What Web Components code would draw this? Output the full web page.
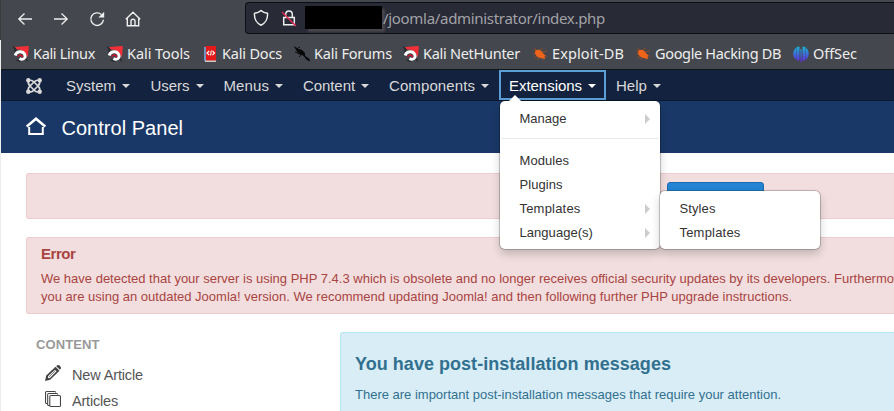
<!DOCTYPE html>
<html lang="en"><head><meta charset="utf-8"><title>Control Panel</title>
<style>
html,body{margin:0;height:411px;overflow:hidden;background:#fff;font-family:"Liberation Sans",Arial,sans-serif}
</style></head><body>
<app-window></app-window>
<script>
const define=(name,css,html,after)=>customElements.define(name,class extends HTMLElement{
  connectedCallback(){
    if(!this.shadowRoot){
      this.attachShadow({mode:'open'}).innerHTML=`<style>*{box-sizing:border-box}${css}</style>`+(typeof html==='function'?html(this):html);
    }
    if(after)after(this);
  }
});

/* Single-line label whose tracking is adjusted to reach the width in "w". */
define('fit-label',':host{display:inline-block;white-space:pre;flex:none}span{display:inline-block}','<span><slot></slot></span>',el=>{
  const s=el.shadowRoot.querySelector('span');
  queueMicrotask(()=>{
    const w=parseFloat(el.getAttribute('w')),n=el.textContent.length;
    if(!w||!n)return;
    s.style.letterSpacing='0';
    const now=s.getBoundingClientRect().width;
    if(now)s.style.letterSpacing=((w-now)/n)+'px';
  });
});

const dragon='<path d="M2 1L15.800 0 15 11.500 12.800 7.500 8 3.800 3.500 3.500Z" fill="#f52f38"/><path d="M0 .800L3.500 4M1 4l2 1.500M11.500 11.500l3 3.500M3.500 14l4 1.500" stroke="#24262a" stroke-width="1.200"/><path d="M2.200 9.500C3.500 5 9.500 4.500 11.500 8 13.500 12 10 14.500 6.500 12.500" fill="none" stroke="#fff" stroke-width="2.900"/><path d="M4.500 10.800C6.500 8.300 9.800 8.500 9.500 11.300" fill="none" stroke="#c9152c" stroke-width="1.500"/>';
const bug='<g stroke="#a14a20" stroke-width=".8" fill="none"><path d="M1.500 4L5 5 3 2M1 8h4M2 12l4-2M7 12l-2 2M10 12l1.500 2M11 9l4.300 1.500M10 6l5-1M8 4l3-2"/></g><path d="M3 6.500C3 4 6.500 2.800 9.300 5l2.500 3 1.700 1.500-1 1.200.800 2.300-3-.800C7 12.500 3.200 10 3 6.500Z" fill="#f0641a"/>';
const ico={
 back:['0 0 16 16','<path d="M15 8H1.500M7.500 2.500L1.800 8l5.700 5.500" fill="none" stroke="#eee" stroke-width="1.300"/>'],
 fwd:['0 0 16 16','<path d="M1 8h13.500M8.500 2.500L14.200 8l-5.700 5.500" fill="none" stroke="#eee" stroke-width="1.300"/>'],
 reload:['0 0 16 16','<path d="M12.400 3.500A6.300 6.300 0 1 0 14.400 8.800" fill="none" stroke="#eee" stroke-width="1.400"/><path d="M15.200.800v5.700H9.300Z" fill="#eee"/>'],
 home:['0 0 16 16','<path d="M.800 8.200L8 1.300l7.200 6.900M2.300 7v7.800h11.400V7M6 14.600V10c0-2.400 4-2.400 4 0v4.600" fill="none" stroke="#eee" stroke-width="1.400"/>'],
 shield:['0 0 16 18','<path d="M8 1.500C10 3.400 12.400 4 14.500 4.200 15 10 12 14.500 8 16.200 4 14.500 1 10 1.500 4.200 3.600 4 6 3.400 8 1.500Z" fill="none" stroke="#eee" stroke-width="1.500" stroke-linejoin="round"/>'],
 lock:['0 0 16 18','<path d="M4.700 8.500V5.500C4.700.800 11.300.800 11.300 5.500v3M2.700 8.500h10.600v7.200H2.700Z" fill="none" stroke="#eee" stroke-width="1.500"/><path d="M1 3L15 17" stroke="#e02950" stroke-width="1.500"/>'],
 dragon:['0 0 16 16',dragon],bug:['0 0 16 16',bug],
 docs:['0 0 16 16','<path d="M3 0h11v16H3Z" fill="#e21a1a"/><path d="M2 1h2v14H2Z" fill="#7292c4"/><path d="M3 14.500h11V16H3Z" fill="#ccc"/><path d="M7.200 5L5 7l2.200 2M9.300 4.500l-.700 5M10.500 5l2 2-2 2" fill="none" stroke="#fff" stroke-width="1.100"/>'],
 forum:['0 0 16 16','<path d="M0 0l5 3.200 2.800.500 3 3 .300 3L15.500 13 16 15.500l-3.500-1.700-3-4L4.500 8 2 4Z" fill="#060708"/><path d="M1 6l4 1.500M4 2l2-1M7 9l-2 2" stroke="#111"/>'],
 off:['0 0 16 16','<defs><linearGradient id="g" gradientUnits="userSpaceOnUse" x1="0" y1="0" x2="0" y2="16"><stop stop-color="#15b9d4"/><stop offset="1" stop-color="#6425e0"/></linearGradient></defs><path d="M6.500.600v14.200C-1.800 14-1.800 1.500 6.500.600ZM7.400 3h1.300v13H7.400ZM9.500.600c8.300.900 8.300 13.400 0 14.200Z" fill="url(#g)"/><path d="M3.500 2v12M12.500 2v12" stroke="#44474d" stroke-width=".400"/>'],
 joomla:['0 0 16 16','<g fill="none" stroke="#d9d9d9" stroke-width="1.700"><path d="M2.500 3C1.500 6 3 7 4.500 8.500L9 13M3 2.500C6 1.500 7 3 8.500 4.500L13 9M13.500 3c1 3-.500 4-2 5.500L7 13M13 2.500C10 1.500 9 3 7.500 4.500L3 9M2.500 13C1.500 10 3 9 4 8M13.500 13c1-3-.500-4-1.500-5M3 13.500c3 1 4-.500 5-1.500M13 13.500c-3 1-4-.500-5-1.500"/></g><g fill="#d9d9d9"><circle cx="2.300" cy="2.300" r="2.200"/><circle cx="13.700" cy="2.300" r="2.200"/><circle cx="2.300" cy="13.700" r="2.200"/><circle cx="13.700" cy="13.700" r="2.200"/></g>'],
 house:['0 0 20 18','<path d="M.700 9.500L10 1.800l9.300 7.700" fill="none" stroke="#fff" stroke-width="2.600"/><path d="M3.200 10v7h13.600v-7" fill="none" stroke="#fff" stroke-width="2"/>'],
 pencil:['0 0 16 16','<path d="M0 16L1.200 10.500 10.500 1.800l4 4L5.200 14.800ZM3 11.200L3.200 13l1.500.200L11.500 6.300 10 4.700Z" fill="#444" fill-rule="evenodd"/><path d="M11.200 1.200C12.500-.300 13.800-.200 15 1s1.300 2.400 0 3.800Z" fill="#444"/><path d="M4 12l6.500-6.500" stroke="#666" stroke-width=".800"/>'],
 copy:['0 0 15 16','<path d="M3 12.500H1.500C.800 12.500.500 12.200.500 11.500V1.500c0-.700.300-1 1-1H9c.700 0 1 .300 1 1M4.500 14.500H3.500c-.700 0-1-.300-1-1v-10c0-.700.300-1 1-1H11c.700 0 1 .300 1 1M5.500 4.500h8c.700 0 1 .300 1 1v9c0 .700-.300 1-1 1h-8c-.700 0-1-.300-1-1v-9c0-.700.300-1 1-1Z" fill="none" stroke="#444"/>']
};
define('ui-icon',':host{display:block;flex:none}svg{display:block;width:100%;height:100%}',el=>{const [v,p]=ico[el.getAttribute('name')];return `<svg viewBox="${v}" preserveAspectRatio="none">${p}</svg>`});

define('browser-bar',`:host{display:flex;flex-direction:column;height:70px;background:#44474d;border-bottom:1px solid #111418;font-family:"Noto Sans",sans-serif}
.tools{display:flex;height:38px;padding:2px 0 0 16px}
.tools>ui-icon{width:16px;height:16px;margin:9px 20px 0 0}
.url{flex:1;margin-left:84px;height:32px;background:#282a36;border:1px solid #0d0e13;border-right:0;border-radius:4px 0 0 4px;display:flex;padding-left:7px}
.url ui-icon{width:16px;height:18px;margin:6px 12px 0 0}
.redact{width:77px;height:23px;margin:3px 1px 0 -4px;background:#000;box-shadow:3px 3px 2px #48454c}
.url fit-label{color:#a2a2a7;font-size:15px;line-height:31px}
`,`<div class="tools"><ui-icon name="back"></ui-icon><ui-icon name="fwd"></ui-icon><ui-icon name="reload"></ui-icon><ui-icon name="home"></ui-icon>
<div class="url"><ui-icon name="shield"></ui-icon><ui-icon name="lock"></ui-icon><div class="redact"></div><fit-label w="222">/joomla/administrator/index.php</fit-label></div></div><book-marks></book-marks>`);

define('book-marks',`:host{display:flex;padding-left:12px;color:#eee;font-size:14.500px;line-height:20px;height:31px;padding-top:5px}
div{display:flex;flex:none}ui-icon{width:16px;height:16px;margin:3px 4px 0 0}`,()=>[
['dragon','Kali Linux',94,62],['dragon','Kali Tools',95,63],['docs','Kali Docs',92,60],['forum','Kali Forums',109,78],['dragon','Kali NetHunter',129,97],['bug','Exploit-DB',103,72],['bug','Google Hacking DB',158,126],['off','OffSec',70,44]
].map(([i,t,w,f])=>`<div style="width:${w}px"><ui-icon name="${i}"></ui-icon><fit-label w="${f}">${t}</fit-label></div>`).join(''));

define('nav-item',`:host{display:flex;position:relative;flex:none;height:30px;padding-left:10px;color:#d9d9d9;font-size:15px;line-height:31px}
:host([open]){color:#fff}:host([open])::before{content:"";position:absolute;inset:0;border:2px solid #5b9fd6}
i{border:4px solid transparent;border-top-color:currentColor;border-bottom:0;height:0;margin:14px 0 0 6px}`,'<slot></slot><i></i><slot name="menu"></slot>');

define('menu-row',`:host{display:flex;justify-content:space-between;height:24px;padding:0 10px 0 19.500px;color:#333;font-size:13px;line-height:24px}
i{border:5px solid transparent;border-left-color:#ccc;border-right:0;height:0;margin-top:7px}:host(:not([more])) i{display:none}`,'<slot></slot><i></i>');

define('drop-menu',`:host{display:block;position:absolute;z-index:5;width:160px;padding:6px 0 4px;background:#fff;border-radius:5px;box-shadow:0 0 0 1px rgba(0,0,0,.2),0 5px 10px rgba(0,0,0,.2)}
:host([tip])::before{content:"";position:absolute;left:8px;top:-6px;border:7px solid transparent;border-top:0;border-bottom-color:#fff}`,'<slot></slot>');

define('nav-bar',`:host{display:flex;height:31px;background:#13233f;border-bottom:1px solid #0e192d;padding-left:25px}
ui-icon{width:16px;height:16px;margin:8px 14px 0 0}hr{border:0;height:1px;background:#e9e9e9;margin:7px 1px 10px}`,()=>`<ui-icon name="joomla"></ui-icon>`+[['System',84.500,50],['Users',73,39],['Menus',79.500,45.500],['Content',86,52],['Components',120,86],['Extensions',107,73],['Help',60,31]].map(([t,w,f])=>`<nav-item style="width:${w}px" ${t=='Extensions'?'open':''}><fit-label w="${f}">${t}</fit-label>${t=='Extensions'?`
<drop-menu slot="menu" tip style="left:1px;top:31px;height:148px">
<menu-row more><fit-label w="47">Manage</fit-label></menu-row><hr>
<menu-row><fit-label w="49.500">Modules</fit-label></menu-row>
<menu-row><fit-label w="43">Plugins</fit-label></menu-row>
<menu-row more><fit-label w="61">Templates</fit-label></menu-row>
<menu-row more><fit-label w="73.500">Language(s)</fit-label></menu-row>
<drop-menu style="left:160px;top:90px;height:58px"><menu-row><fit-label w="36">Styles</fit-label></menu-row><menu-row><fit-label w="61">Templates</fit-label></menu-row></drop-menu>
</drop-menu>`:''}</nav-item>`).join(''));

define('page-title',`:host{display:flex;height:52px;background:#1a3867;padding:16px 0 0 25px;color:#fff;font-size:20px;line-height:22px}ui-icon{width:20px;height:18px;margin-right:15.500px}`,'<ui-icon name="house"></ui-icon><fit-label w="121.500">Control Panel</fit-label>');

define('alert-box',`:host{display:block;background:#f2dede;border:1px solid #eccbd1;border-right:0;border-radius:3px 0 0 3px;color:#a94442;overflow:hidden;padding-left:14px;font-size:13px;line-height:18px}
:host([info]){background:#d9edf7;border-color:#b5e7ef;color:#31708f}`,'<slot></slot>');

define('quick-link',':host{display:flex;height:26px;color:#555;font-size:14.500px;line-height:26px;padding-left:9px}ui-icon{width:16px;height:16px;margin:3px 11px 0 0}',el=>`<ui-icon name="${el.getAttribute('icon')}"></ui-icon><slot></slot>`);

define('app-window',`:host{display:flex;height:411px;width:894px;overflow:hidden}
.edge{width:1px;flex:none;background:linear-gradient(#3b3b3d 40px,#eee 40px)}
.page{flex:1;min-width:0}
main{padding:20px 0 0 25px}
.btn{width:97px;height:26px;margin:8px 0 0 626px;background:#2384d3;border:1px solid #1d6cb0;border-radius:3px}
fit-label.l{display:block}
.cols{display:flex;margin-top:18px}
aside{width:314px;flex:none;padding:5px 0 0 10px}
.h{font-size:13px;font-weight:bold;color:#999;line-height:16px;display:block;margin-bottom:9px}
.info{flex:1;height:110px}`,`<div class="edge"></div><div class="page"><browser-bar></browser-bar><nav-bar></nav-bar><page-title></page-title>
<main><alert-box style="height:46px"><div class="btn"></div></alert-box>
<alert-box style="height:77px;margin-top:18px"><fit-label class="l" w="34.500" style="font-size:15px;font-weight:bold;line-height:20px;margin:6px 0 6px">Error</fit-label>
<fit-label class="l" w="853">We have detected that your server is using PHP 7.4.3 which is obsolete and no longer receives official security updates by its developers. Furthermo</fit-label>
<fit-label class="l" w="751">you are using an outdated Joomla! version. We recommend updating Joomla! and then following further PHP upgrade instructions.</fit-label></alert-box>
<div class="cols"><aside><fit-label class="h" w="63.500">CONTENT</fit-label><quick-link icon="pencil"><fit-label w="71">New Article</fit-label></quick-link><quick-link icon="copy"><fit-label w="46">Articles</fit-label></quick-link></aside>
<alert-box info class="info"><fit-label class="l" w="316" style="font-size:18px;font-weight:bold;line-height:22px;margin:20px 0 11px">You have post-installation messages</fit-label><fit-label class="l" w="426">There are important post-installation messages that require your attention.</fit-label></alert-box></div></main></div>`);
</script></body></html>
